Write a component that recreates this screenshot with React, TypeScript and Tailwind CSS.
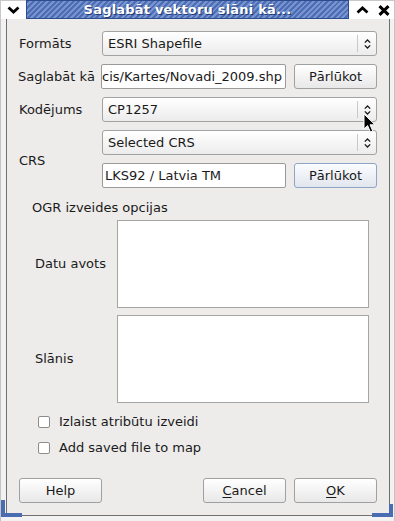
import React from 'react'

const font = "font-['DejaVu_Sans','Liberation_Sans',sans-serif]"

function ComboArrows() {
  return (
    <svg width="7" height="10" viewBox="0 0 7 10" className="block">
      <path d="M0.8 3.6 L3.5 1 L6.2 3.6" fill="none" stroke="#1a1a1a" strokeWidth="1.3" />
      <path d="M0.8 6.4 L3.5 9 L6.2 6.4" fill="none" stroke="#1a1a1a" strokeWidth="1.3" />
    </svg>
  )
}

function Combo({ text }: { text: string }) {
  return (
    <div className="h-[25px] flex items-center rounded-[3px] border border-[#a2a2a2] bg-gradient-to-b from-white to-[#ececec] pl-[5px]">
      <span className="flex-1 whitespace-nowrap">{text}</span>
      <div className="w-px h-[17px] bg-[#c9c9c9]" />
      <div className="w-[18px] flex items-center justify-center">
        <ComboArrows />
      </div>
    </div>
  )
}

function LineEdit({ text, right }: { text: string; right?: boolean }) {
  return (
    <div
      className={`h-[25px] flex-1 min-w-0 flex items-center overflow-hidden whitespace-nowrap rounded-[2px] border border-[#9a9a9a] bg-white ${
        right ? 'justify-end pr-[3px]' : 'pl-[2px]'
      }`}
    >
      <span>{text}</span>
    </div>
  )
}

function Button({ children, focused, className = '' }: { children: React.ReactNode; focused?: boolean; className?: string }) {
  return (
    <div
      className={`h-[25px] w-[83px] flex items-center justify-center rounded-[3px] border ${
        focused
          ? 'border-[#8ea4c8] bg-gradient-to-b from-[#fbfcfe] to-[#e1e6ee]'
          : 'border-[#a0a0a0] bg-gradient-to-b from-white to-[#e8e8e8]'
      } ${className}`}
    >
      {children}
    </div>
  )
}

function Checkbox({ label }: { label: string }) {
  return (
    <div className="flex items-center h-[16px] pl-[31px]">
      <div className="w-[12px] h-[12px] rounded-[2px] border border-[#8c8c8c] bg-white" />
      <span className="ml-[9px] whitespace-nowrap">{label}</span>
    </div>
  )
}

export default function App() {
  return (
    <div className={`relative w-[395px] h-[521px] bg-[#f2f2f2] flex flex-col text-[13px] text-[#1a1a1a] ${font}`}>
      {/* Title bar */}
      <div className="h-[19px] flex shrink-0">
        <div className="w-[26px] flex items-center justify-center bg-white border-l border-t border-[#c8c8c8]">
          <svg width="13" height="8" viewBox="0 0 13 8">
            <path d="M1.5 1.5 L6.5 6 L11.5 1.5" fill="none" stroke="#000" strokeWidth="2.8" />
          </svg>
        </div>
        <div className="flex-1 flex items-center justify-center border border-[#2d4c8e] bg-[repeating-linear-gradient(135deg,#4d6eb4_0px,#4d6eb4_2px,#7794d0_2px,#7794d0_4px)]">
          <span className="text-white font-bold text-[13px] leading-none [text-shadow:1px_1px_0_#1f3a73] tracking-[0.2px]">
            Saglabāt vektoru slāni kā...
          </span>
        </div>
        <div className="w-[46px] flex items-center bg-white border-t border-r border-[#c8c8c8]">
          <div className="w-[22px] flex justify-center pl-[4px]">
            <svg width="13" height="8" viewBox="0 0 13 8">
              <path d="M1.5 6.5 L6.5 2 L11.5 6.5" fill="none" stroke="#000" strokeWidth="2.8" />
            </svg>
          </div>
          <div className="w-[22px] flex justify-center pl-[3px]">
            <svg width="12" height="11" viewBox="0 0 12 11">
              <path d="M1.5 1.2 L10.5 9.8 M10.5 1.2 L1.5 9.8" fill="none" stroke="#000" strokeWidth="3" />
            </svg>
          </div>
        </div>
      </div>

      {/* Frame */}
      <div className="flex-1 flex pl-[5px] pr-[4px] pb-[5px] border-l border-r border-[#c4c4c4]">
        <div className="flex-1 flex flex-col bg-[#edeceb] border-l border-r border-b border-[#707070] pt-[12px]">
          {/* Form rows */}
          <div className="flex flex-col gap-[8px] pl-[12px] pr-[12px]">
            <div className="flex items-center">
              <span className="w-[83px] shrink-0">Formāts</span>
              <div className="flex-1">
                <Combo text="ESRI Shapefile" />
              </div>
            </div>
            <div className="flex items-center">
              <span className="w-[83px] shrink-0 whitespace-nowrap -ml-[1px] pr-[1px]">Saglabāt kā</span>
              <div className="flex-1 flex gap-[8px]">
                <LineEdit text="cis/Kartes/Novadi_2009.shp" right />
                <Button>Pārlūkot</Button>
              </div>
            </div>
            <div className="flex items-center">
              <span className="w-[83px] shrink-0">Kodējums</span>
              <div className="flex-1">
                <Combo text="CP1257" />
              </div>
            </div>
            <div className="flex items-center">
              <span className="w-[83px] shrink-0 pt-[4px]">CRS</span>
              <div className="flex-1 flex flex-col gap-[8px]">
                <Combo text="Selected CRS" />
                <div className="flex gap-[8px]">
                  <LineEdit text="LKS92 / Latvia TM" />
                  <Button focused>Pārlūkot</Button>
                </div>
              </div>
            </div>
          </div>

          {/* OGR group */}
          <div className="mt-[12px] pl-[25px] pr-[20px]">
            <div className="h-[16px] leading-[16px]">OGR izveides opcijas</div>
            <div className="mt-[4px] flex flex-col gap-[7px]">
              <div className="flex items-center">
                <span className="w-[85px] shrink-0 pl-[3px]">Datu avots</span>
                <div className="flex-1 h-[88px] bg-white border border-[#a5a5a5]" />
              </div>
              <div className="flex items-center">
                <span className="w-[85px] shrink-0 pl-[3px]">Slānis</span>
                <div className="flex-1 h-[88px] bg-white border border-[#a5a5a5]" />
              </div>
            </div>
          </div>

          {/* Checkboxes */}
          <div className="mt-[11px] flex flex-col gap-[10px]">
            <Checkbox label="Izlaist atribūtu izveidi" />
            <Checkbox label="Add saved file to map" />
          </div>

          {/* Bottom buttons */}
          <div className="mt-[22px] flex pl-[12px] pr-[12px] gap-[8px]">
            <Button className="w-[83px]">Help</Button>
            <div className="flex-1" />
            <Button>
              <span>
                <span className="underline underline-offset-2">C</span>ancel
              </span>
            </Button>
            <Button>
              <span>
                <span className="underline underline-offset-2">O</span>K
              </span>
            </Button>
          </div>
        </div>
      </div>

      {/* Blue frame corners */}
      <div className="absolute left-[1px] bottom-[4px] w-[4px] h-[17px] bg-[#4a6cb0]" />
      <div className="absolute left-[1px] bottom-[4px] w-[21px] h-[4px] bg-[#4a6cb0]" />
      <div className="absolute right-[2px] bottom-[4px] w-[4px] h-[13px] bg-[#4a6cb0]" />
      <div className="absolute right-[2px] bottom-[4px] w-[21px] h-[4px] bg-[#4a6cb0]" />

      {/* Mouse pointer */}
      <svg className="absolute left-[363px] top-[113px]" width="14" height="21" viewBox="0 0 14 21">
        <path d="M1 1 L1 16 L4.6 12.6 L7.4 19 L9.8 18 L7 11.8 L12 11.8 Z" fill="#000" stroke="#fff" strokeWidth="1" />
      </svg>
    </div>
  )
}
